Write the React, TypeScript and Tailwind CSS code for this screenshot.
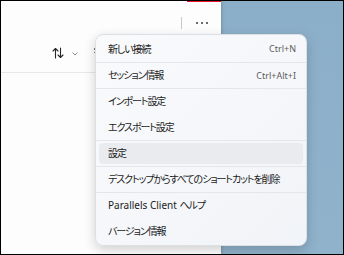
import React from 'react';

interface MenuItem {
    label: string;
    shortcut?: string;
    separator?: boolean;
    active?: boolean;
}

const items: MenuItem[] = [
    { label: '新しい接続', shortcut: 'Ctrl+N' },
    { label: 'セッション情報', shortcut: 'Ctrl+Alt+I', separator: true },
    { label: 'インポート設定', separator: true },
    { label: 'エクスポート設定' },
    { label: '設定', separator: true, active: true },
    { label: 'デスクトップからすべてのショートカットを削除', separator: true },
    { label: 'Parallels Client ヘルプ', separator: true },
    { label: 'バージョン情報' },
];

// latin runs keep normal spacing, japanese runs get tightened like Yu Gothic UI
const Label: React.FC<{ text: string }> = ({ text }) => {
    const parts = text.match(/[\x20-\x7e]+|[^\x20-\x7e]+/g) || [];
    return (
        <span className="text-[10px] text-[#1b1b1b] whitespace-nowrap">
            {parts.map((p, i) =>
                /^[\x20-\x7e]+$/.test(p) ? (
                    <span key={i}>{p}</span>
                ) : (
                    <span key={i} className="tracking-[-1.1px]">{p}</span>
                )
            )}
        </span>
    );
};

const SortIcon: React.FC = () => (
    <svg width="12" height="12" viewBox="0 0 12 12" fill="none" stroke="#262626" strokeWidth="1.1" strokeLinecap="round" strokeLinejoin="round">
        <path d="M3.5 11V1.5M1 4l2.5-2.5L6 4" />
        <path d="M8.5 1v9.5M6 8l2.5 2.5L11 8" />
    </svg>
);

const App: React.FC = () => {
    return (
        <div
            className="relative w-[344px] h-[255px] border border-black flex overflow-hidden"
            style={{ fontFamily: '"Noto Sans", "Noto Sans CJK JP", sans-serif' }}
        >
            {/* app window */}
            <div className="w-[220px] h-full bg-[#fdfdfe] flex flex-col shadow-[1px_0_3px_rgba(0,0,0,0.18)] z-10">
                <div className="h-px flex justify-end">
                    <div className="w-[34px] h-px bg-[#e81123]" />
                </div>
                <div className="h-[41px] flex items-center justify-end pr-[13px]">
                    <div className="w-px h-[12px] bg-[#c8c8c8] mr-[14px]" />
                    <div className="flex gap-[3px]">
                        <span className="w-[2px] h-[2px] rounded-full bg-[#3a3a3a]" />
                        <span className="w-[2px] h-[2px] rounded-full bg-[#3a3a3a]" />
                        <span className="w-[2px] h-[2px] rounded-full bg-[#3a3a3a]" />
                    </div>
                </div>
                <div className="h-[30px] border-b border-[#e8e8e8] flex items-start pt-[4px] pl-[51px]">
                    <SortIcon />
                    <svg width="6" height="4" viewBox="0 0 6 4" fill="none" stroke="#8a8a8a" strokeWidth="1" className="ml-[8px] mt-[5px]">
                        <path d="M0.5 0.5L3 3l2.5-2.5" />
                    </svg>
                    <div className="ml-[16px] mt-[1px] flex flex-col gap-[2px]">
                        <span className="w-[1.5px] h-[1.5px] bg-[#777]" />
                        <span className="w-[1.5px] h-[1.5px] bg-[#777]" />
                    </div>
                </div>
                <div className="flex-1" />
            </div>
            {/* desktop */}
            <div className="flex-1 h-full bg-gradient-to-b from-[#8cafc9] to-[#90b2cb]" />

            {/* context menu */}
            <div className="absolute left-[94px] top-[33px] w-[212px] py-px rounded-[8px] border border-[#dcdfe3] bg-gradient-to-br from-[#f9fafc] to-[#f1f4f8] shadow-[0_4px_12px_rgba(0,0,0,0.18)] z-20 [font-feature-settings:'palt']">
                {items.map((item) => (
                    <div
                        key={item.label}
                        className={`h-[26px] px-[3px] py-[2px] ${item.separator ? 'border-t border-[#e4e6ea]' : ''}`}
                    >
                        <div
                            className={`h-full flex items-center justify-between pl-[9px] pr-[7px] rounded-[4px] ${
                                item.active ? 'bg-[#e9ebef]' : ''
                            }`}
                        >
                            <Label text={item.label} />
                            {item.shortcut && (
                                <span className="text-[9px] text-[#5c5c5c] whitespace-nowrap">{item.shortcut}</span>
                            )}
                        </div>
                    </div>
                ))}
            </div>
        </div>
    );
};

export default App;
